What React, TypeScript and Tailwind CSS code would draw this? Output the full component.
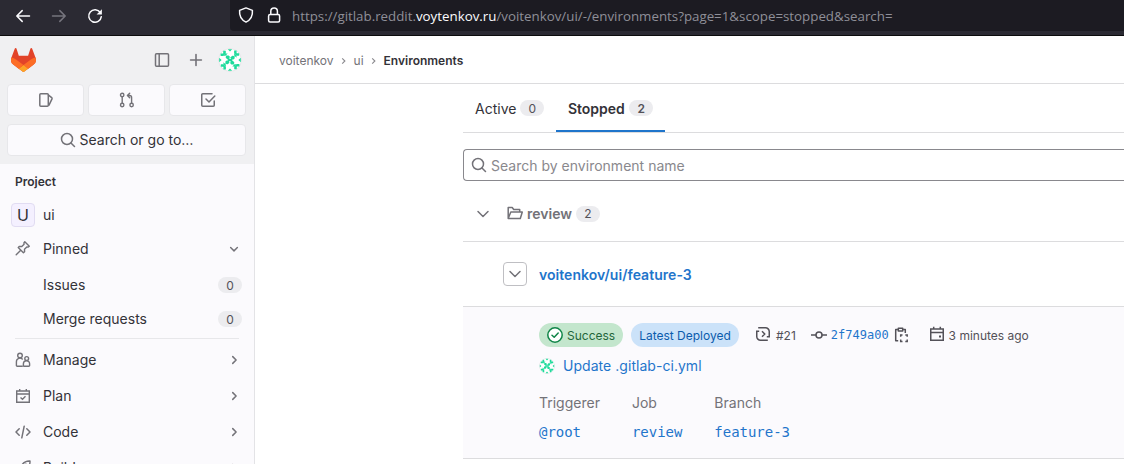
import React from "react";

type IconProps = { className?: string; children: React.ReactNode; size?: number; sw?: number };
const Icon = ({ className = "", children, size = 16, sw = 1.5 }: IconProps) => (
  <svg width={size} height={size} viewBox="0 0 16 16" fill="none" stroke="currentColor" strokeWidth={sw} className={`shrink-0 ${className}`}>
    {children}
  </svg>
);

const ChevronDown = ({ size = 16, className = "" }: { size?: number; className?: string }) => (
  <Icon size={size} sw={size < 16 ? 1.9 : 1.5} className={className}>
    <path d={size < 16 ? "M3.500 6L8 10.500 12.500 6" : "M3 5.500l5 5 5-5"} strokeLinecap="round" strokeLinejoin="round" />
  </Icon>
);
const ChevronRight = ({ size = 12, className = "" }: { size?: number; className?: string }) => (
  <Icon size={size} sw={2} className={className}><path d="M6.300 3.500L10.800 8 6.300 12.500" strokeLinecap="round" strokeLinejoin="round" /></Icon>
);
const SearchIcon = () => (
  <Icon><circle cx="7" cy="7" r="5.5" /><path d="M11 11L14.500 14.500" strokeLinecap="round" /></Icon>
);

const Avatar = ({ size }: { size: number }) => (
  <svg width={size} height={size} viewBox="0 0 24 24" className="shrink-0 rounded-full">
    <circle cx="12" cy="12" r="11.5" fill="#fff" stroke="#e2e2e5" />
    <g fill="#1edb9b">
      {[0, 90, 180, 270].map((a) => (
        <g key={a} transform={`rotate(${a} 12 12)`}>
          <path d="M9.800 1.200h4.400L12 3.600z" />
          <path d="M5.200 2.800h2.600v2.600L5.200 7.900H2.600V5.400h2.600z" />
          <path d="M7.400 5.400l2.300.1-2.200 2.300H5.200z" />
          <path d="M8 7.400h2.600l1 1.200v1.800l-.8.9H9.300L7.700 9.800z" />
        </g>
      ))}
      <path d="M9.800 10.900h4.400v2.200H9.800z" />
    </g>
  </svg>
);

const Logo = () => (
  <svg width="25" height="24" viewBox="0 0 25 24" className="shrink-0">
    <path d="m24.507 9.5-.034-.09L21.082.562a.896.896 0 0 0-1.694.091l-2.29 7.01H7.825L5.535.653a.898.898 0 0 0-1.694-.09L.451 9.411.416 9.5a6.297 6.297 0 0 0 2.09 7.278l.012.01.03.022 5.16 3.867 2.56 1.935 1.554 1.176a1.051 1.051 0 0 0 1.268 0l1.555-1.176 2.56-1.935 5.197-3.89.014-.01A6.297 6.297 0 0 0 24.507 9.5Z" fill="#E24329" />
    <path d="m24.507 9.5-.034-.09a11.44 11.44 0 0 0-4.56 2.051l-7.447 5.632 4.742 3.584 5.197-3.89.014-.01A6.297 6.297 0 0 0 24.507 9.5Z" fill="#FC6D26" />
    <path d="m7.707 20.677 2.56 1.935 1.555 1.176a1.051 1.051 0 0 0 1.268 0l1.555-1.176 2.56-1.935-4.743-3.584-4.755 3.584Z" fill="#FCA326" />
    <path d="M5.01 11.461a11.43 11.43 0 0 0-4.56-2.05L.416 9.5a6.297 6.297 0 0 0 2.09 7.278l.012.01.03.022 5.16 3.867 4.745-3.584-7.444-5.632Z" fill="#FC6D26" />
  </svg>
);

const BrowserBar = () => (
  <div className="flex h-9 shrink-0 border-b border-[#0c0c0d] bg-[#2b2a33] text-[#fbfbfe]">
    <div className="flex w-[230px] items-start gap-5 pl-[15px] pt-2">
      <Icon><path d="M14.5 8H2M7.2 2.6L1.8 8l5.4 5.4" strokeLinecap="round" strokeLinejoin="round" /></Icon>
      <Icon className="text-[#76757e]"><path d="M1.5 8H14M8.8 2.6L14.2 8l-5.4 5.4" strokeLinecap="round" strokeLinejoin="round" /></Icon>
      <Icon>
        <path d="M13.3 4.500A6.300 6.300 0 1 0 14.300 8.700" strokeLinecap="round" />
        <path d="M14.9 1.2v5.3H9.6z" fill="currentColor" stroke="none" />
      </Icon>
    </div>
    <div className="flex h-[31px] flex-1 items-start rounded-bl bg-[#1c1b22] pl-2">
      <Icon className="mt-[7px]"><path d="M8 .9l6.4 2.5c.4 4.6-1.3 9.3-6.4 11.7C2.900 12.700 1.200 8 1.600 3.400z" strokeLinejoin="round" /></Icon>
      <Icon className="ml-3 mt-[7px]">
        <rect x="2.6" y="7.600" width="11" height="7.400" rx="1.500" />
        <path d="M4.800 7.500V4.300a3.300 3.300 0 0 1 6.600 0v3.200" />
      </Icon>
      <div className="ml-[10px] mt-[6px] whitespace-nowrap font-['Open_Sans',sans-serif] text-[13.32px] leading-5 text-[#8f8f98]">
        https://gitlab.reddit.<span className="text-[#fbfbfe]">voytenkov.ru</span>/voitenkov/ui/-/environments?page=1&amp;scope=stopped&amp;search=
      </div>
    </div>
  </div>
);

const TopButton = ({ children }: { children: React.ReactNode }) => (
  <div className="flex h-8 flex-1 items-center justify-center rounded border border-[#e7e7ea] bg-[#fbfafd] text-[#737278]">{children}</div>
);

const Badge = ({ children, className = "" }: { children: React.ReactNode; className?: string }) => (
  <span className={`flex h-4 w-6 items-center justify-center rounded-full bg-[#ececef] text-[12px] leading-4 text-[#535158] ${className}`}>{children}</span>
);

const NavItem = ({ icon, label }: { icon: React.ReactNode; label: string }) => (
  <div className="flex h-9 items-center pl-[15px] pr-[14px] text-[#737278]">
    {icon}
    <span className="ml-3 flex-1 text-[#333238]">{label}</span>
    <ChevronRight />
  </div>
);

const PinnedItem = ({ label }: { label: string }) => (
  <div className="flex h-[34px] shrink-0 items-center justify-between pl-[43px] pr-3 pt-[2px] text-[#333238]">{label}<Badge className="pt-px">0</Badge></div>
);

const Sidebar = () => (
  <div className="flex w-[255px] shrink-0 flex-col overflow-hidden border-r border-[#e3e3e6] bg-[#fbfafd]">
    <div className="h-32 shrink-0 bg-[#f0f0f2] px-[7px] text-[#737278]">
      <div className="flex h-12 items-center pl-[4px] pr-[4px]">
        <Logo />
        <Icon className="ml-[118px]"><rect x="1.500" y="1.750" width="13" height="12.500" rx="1" /><path d="M5.200 2v12" /></Icon>
        <Icon className="ml-[18px]" sw={1.6}><path d="M8 2.600v10.800M2.600 8h10.800" strokeLinecap="round" /></Icon>
        <div className="ml-[14px]"><Avatar size={24} /></div>
      </div>
      <div className="flex gap-1 pr-[1px]">
        <TopButton>
          <Icon><rect x="1.800" y="1.750" width="8.500" height="12.500" rx="1" /><path d="M10.500 3.200l3.200 2.500c.4.300.5.700.3 1.200l-3 6.200" strokeLinecap="round" /></Icon>
        </TopButton>
        <TopButton>
          <Icon sw={1.4}><circle cx="3.200" cy="3" r="1.700" /><circle cx="3.200" cy="13" r="1.700" /><circle cx="12.600" cy="13" r="1.700" /><path d="M3.200 4.700v6.600M12.600 11.300V5.500c0-1.300-.8-2-2-2H8.500M10.700 1.200L8.400 3.500l2.300 2.300" strokeLinejoin="round" strokeLinecap="round" /></Icon>
        </TopButton>
        <TopButton>
          <Icon><path d="M12 1.750H2.750a1 1 0 0 0-1 1v10.500a1 1 0 0 0 1 1h10.500a1 1 0 0 0 1-1V9" strokeLinecap="round" /><path d="M6 7l3 3 5.800-6" strokeLinecap="round" strokeLinejoin="round" /></Icon>
        </TopButton>
      </div>
      <div className="mr-[1px] mt-2 flex h-8 items-center justify-center gap-1 rounded border border-[#e7e7ea] bg-[#fbfafd]">
        <SearchIcon /><span className="text-[#333238]">Search or go to…</span>
      </div>
    </div>
    <div className="flex h-[35px] shrink-0 items-center pl-[15px] text-[12px] font-semibold text-[#333238]">Project</div>
    <div className="flex h-8 shrink-0 items-center pl-[11px] text-[#333238]">
      <div className="-mt-px flex size-6 items-center justify-center rounded border border-[#e1dcf2] bg-[#f4f0ff] text-[16px]">U</div>
      <span className="ml-2">ui</span>
    </div>
    <div className="flex h-9 shrink-0 items-center pl-[15px] pr-[14px] text-[#737278]">
      <Icon sw={1.400} className="-mt-[2px]"><path d="M1.200 14.800l4.300-4.300M9.800 1.700l4.500 4.500-1.300.9-1.200-.2-2.300 2.300.1 2.600-1.200 1L3.200 7.600l1-1.200 2.600.1 2.300-2.300-.2-1.300z" strokeLinejoin="round" strokeLinecap="round" /></Icon>
      <span className="ml-3 flex-1 text-[#333238]">Pinned</span>
      <ChevronDown size={12} />
    </div>
    <PinnedItem label="Issues" />
    <PinnedItem label="Merge requests" />
    <div className="mx-[15px] mb-[3px] mt-[3px] h-px shrink-0 bg-[#e7e7ea]" />
    <div className="shrink-0">
      <NavItem label="Manage" icon={<Icon sw={1.400} className="-mt-px"><circle cx="5" cy="3.500" r="2.300" /><path d="M7.800 14.300H2.200a.8.8 0 0 1-.8-.8V9.700a3.500 3.500 0 0 1 6.300-2.200" /><circle cx="11.700" cy="6.500" r="1.900" /><path d="M9.200 14.300a.8.800 0 0 1-.8-.8v-1.700a3.100 3.100 0 0 1 6.200 0v1.700a.8.800 0 0 1-.8.8z" /></Icon>} />
      <NavItem label="Plan" icon={<Icon sw={1.400} className="-mt-px"><path d="M1.700 3h12.600v11.300H1.700zM1.500 6h13M4.700 1v2M11.300 1v2" /><path d="M5.500 9.500l2 1.800 3-3" /></Icon>} />
      <NavItem label="Code" icon={<Icon className="-mt-px"><path d="M4.200 4.800L1 8l3.200 3.200M11.800 4.800L15 8l-3.200 3.200M9.200 2.200L6.800 13.800" strokeLinecap="round" strokeLinejoin="round" /></Icon>} />
      <NavItem label="Build" icon={<Icon sw={1.400} className="-mt-px"><path d="M15 1c-4-.2-7 1.500-9 5.500L9.500 10C13.500 8 15.200 5 15 1zM6 6.500H3L1 9l3.500.5M9.500 10v3L7 15l-.5-3.500" strokeLinejoin="round" /><circle cx="10.800" cy="5.200" r="1" /></Icon>} />
    </div>
  </div>
);

const CrumbSeparator = () => (
  <Icon size={16} sw={1.100} className="mx-[2px] text-[#89888d]"><path d="M6.200 5.300L8.900 8l-2.700 2.700" /></Icon>
);

const Crumbs = () => (
  <div className="flex h-12 items-center border-b border-[#dcdcde] pl-6 pt-[2px] text-[12px] text-[#737278]">
    <span>voitenkov</span>
    <CrumbSeparator />
    <span>ui</span>
    <CrumbSeparator />
    <span className="font-semibold text-[#333238]">Environments</span>
  </div>
);

const Tabs = () => (
  <div className="flex h-[49px] border-b border-[#dcdcde] text-[#333238]">
    <div className="flex h-12 items-center px-3 pt-[2px]">Active<Badge className="-mt-[2px] ml-1 pt-px">0</Badge></div>
    <div className="flex h-12 items-center border-b-2 border-[#1f75cb] pl-3 pr-3 pt-1 font-semibold"><span className="-ml-[0.5px] mr-[0.5px]">Stopped</span><Badge className="-mt-[2px] ml-1 pt-px">2</Badge></div>
  </div>
);

const Detail = ({ label, value }: { label: string; value: string }) => (
  <div>
    <div className="text-[#737278]">{label}</div>
    <div className="mt-[9px] font-['DejaVu_Sans_Mono',monospace] text-[14px] tracking-[-0.03px] text-[#1f75cb]">{value}</div>
  </div>
);

const Deployment = () => (
  <div className="h-[153px] border-y border-[#dcdcde] bg-[#fbfafd] pl-[76px] pt-4">
    <div className="flex h-6 items-center text-[12px] text-[#535158]">
      <span className="flex h-6 w-[84px] items-center rounded-full bg-[#c3e6cd] pl-2 text-[#24663b]">
        <Icon className="text-[#108548]" sw={1.500}><circle cx="8" cy="8" r="7.200" fill="#fff" /><path d="M5 8.200l2.200 2.100L11.200 6" strokeLinejoin="round" strokeLinecap="round" /></Icon>
        <span className="ml-1 pt-[2px]">Success</span>
      </span>
      <span className="ml-2 flex h-6 w-[108px] items-center justify-center rounded-full bg-[#cbe2f9] pt-[2px] text-[#0b5cad]">Latest Deployed</span>
      <Icon className="-mt-[2px] ml-4"><path d="M3.200 1.750H10.500a3.750 3.750 0 0 1 3.750 3.750v5.250M12.800 14.250H5.500A3.750 3.750 0 0 1 1.750 10.500V5M1 5.200h3.200M15 10.800h-3.200M7 5.300L9.700 8 7 10.700" /></Icon>
      <span className="ml-[5px] pt-[2px]">#21</span>
      <Icon className="-mt-px ml-[15px]"><circle cx="8" cy="8" r="3" /><path d="M0 8h5M11 8h5" /></Icon>
      <span className="ml-1 font-['DejaVu_Sans_Mono',monospace] text-[12px] text-[#1f75cb]">2f749a00</span>
      <Icon className="ml-[4px]"><path d="M4.500 2.500H2.700v11.300h2.500M10.500 2.500h1.800V6M5.300 1.300h4.400v2.700H5.300z" strokeLinejoin="round" /><path d="M7.700 9.700V8h1.800M12.300 8h1.900v1.700M14.200 12.500v2h-1.900M9.500 14.500H7.700v-2" /></Icon>
      <Icon className="-mt-[2px] ml-5"><path d="M1.750 3h12.500v11.200H1.750zM1.750 6.500h12.500M4.700.8V3M11.300.8V3" /><path d="M10 9.500h2v2h-2z" fill="currentColor" stroke="none" /></Icon>
      <span className="ml-1 pt-[2px]">3 minutes ago</span>
    </div>
    <div className="mt-[9px] flex h-5 items-center">
      <Avatar size={16} />
      <span className="ml-2 tracking-[0.040px] text-[#1f75cb]">Update .gitlab-ci.yml</span>
    </div>
    <div className="mt-[17px] flex gap-8 leading-5">
      <Detail label="Triggerer" value="@root" />
      <Detail label="Job" value="review" />
      <Detail label="Branch" value="feature-3" />
    </div>
  </div>
);

export default function App() {
  return (
    <div className="flex h-[464px] w-[1124px] flex-col overflow-hidden bg-white font-[Inter,sans-serif] text-[14px] leading-5">
      <BrowserBar />
      <div className="flex min-h-0 flex-1">
        <Sidebar />
        <div className="min-w-0 flex-1">
          <Crumbs />
          <div className="ml-52">
            <Tabs />
            <div className="mt-4 flex h-8 items-center gap-1 rounded-l border border-r-0 border-[#89888d] pl-[7px] text-[#737278]">
              <SearchIcon /><span className="pt-[2px] tracking-[0.01px] text-[#89888d]">Search by environment name</span>
            </div>
            <div className="flex h-[61px] items-center border-b border-[#dcdcde] pl-3 pt-[5px] text-[#737278]">
              <ChevronDown />
              <Icon className="-mt-[2px] ml-4"><path d="M1.200 13.500V2.500h4l1.500 2h6V7M1.200 13.500L3.800 7h11.500l-2 6.500z" strokeLinejoin="round" /></Icon>
              <span className="ml-1 font-semibold">review</span>
              <Badge className="ml-1">2</Badge>
            </div>
            <div className="flex h-16 items-center pl-10">
              <div className="flex size-6 items-center justify-center rounded border border-[#bfbfc3] text-[#737278]"><ChevronDown /></div>
              <span className="ml-3 pt-[2px] font-semibold tracking-[0.04px] text-[#1f75cb]">voitenkov/ui/feature-3</span>
            </div>
            <Deployment />
          </div>
        </div>
      </div>
    </div>
  );
}
